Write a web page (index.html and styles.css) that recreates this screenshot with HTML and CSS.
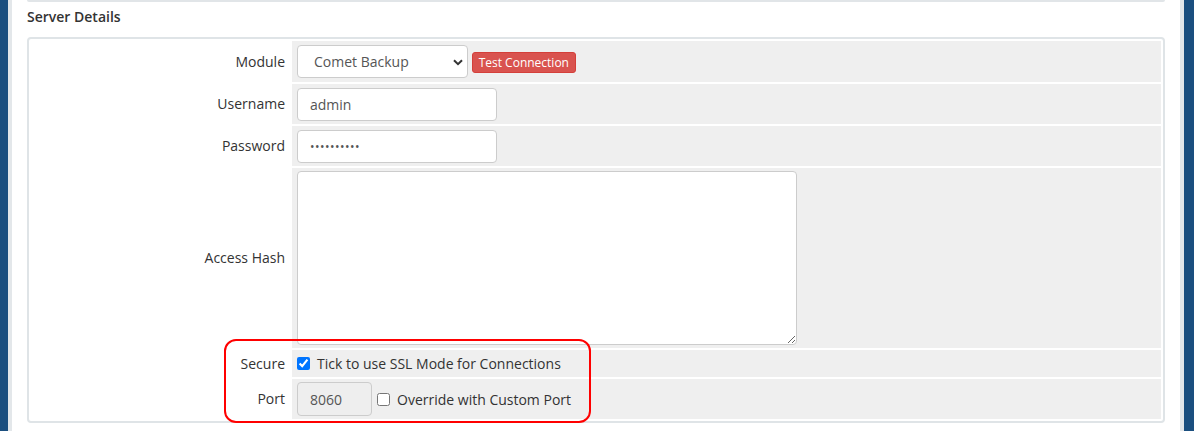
FILE: index.html
```html
<!DOCTYPE html>
<html lang="en">
<head>
<meta charset="utf-8">
<title>Server Details</title>
<link rel="stylesheet" href="styles.css">
</head>
<body>
<div class="frame">
  <div class="edge-blue left"></div>
  <div class="edge-gray"></div>
  <main class="content">
    <div class="prev-panel"></div>
    <h2 class="section-title">Server Details</h2>
    <div class="panel">
      <table class="form">
        <tr class="row-module">
          <td class="fieldlabel">Module</td>
          <td class="fieldarea">
            <span class="select-wrap">
              <select class="form-control select-module">
                <option>Comet Backup</option>
              </select>
              <svg class="chevron" width="10" height="7" viewBox="0 0 10 7"><path d="M1 1.2 L5 5.2 L9 1.2" fill="none" stroke="#333" stroke-width="2"/></svg>
            </span>
            <button class="btn-danger" type="button">Test Connection</button>
          </td>
        </tr>
        <tr class="row-std">
          <td class="fieldlabel">Username</td>
          <td class="fieldarea"><input class="form-control input-std" type="text" value="admin"></td>
        </tr>
        <tr class="row-std">
          <td class="fieldlabel">Password</td>
          <td class="fieldarea"><input class="form-control input-std input-pass" type="password" value="1234567890"></td>
        </tr>
        <tr class="row-hash">
          <td class="fieldlabel">Access Hash</td>
          <td class="fieldarea"><textarea class="form-control hash"></textarea></td>
        </tr>
        <tr class="row-secure">
          <td class="fieldlabel">Secure</td>
          <td class="fieldarea">
            <label class="check"><input type="checkbox" checked> Tick to use SSL Mode for Connections</label>
          </td>
        </tr>
        <tr class="row-std">
          <td class="fieldlabel">Port</td>
          <td class="fieldarea">
            <div class="port-line">
              <input class="form-control input-port" type="text" value="8060" disabled>
              <label class="check"><input type="checkbox"> Override with Custom Port</label>
            </div>
          </td>
        </tr>
      </table>
      <div class="highlight"></div>
    </div>
  </main>
  <div class="edge-gray"></div>
  <div class="edge-blue right"></div>
</div>
</body>
</html>
```
FILE: styles.css
```css
* { box-sizing: border-box; }

html, body {
  margin: 0;
  padding: 0;
  background: #ffffff;
}

body {
  font-family: "Open Sans", "Liberation Sans", sans-serif;
  font-size: 14px;
  color: #333333;
}

.frame {
  display: flex;
  height: 431px;
  overflow: hidden;
}

.edge-blue {
  background: #1b4f7f;
  flex: 0 0 auto;
}
.edge-blue.left { width: 8px; }
.edge-blue.right { width: 10px; }

.edge-gray {
  width: 4px;
  flex: 0 0 auto;
  background: #e3e7ea;
}

.content {
  flex: 1 1 auto;
  padding: 0 15px;
  background: #ffffff;
}

.prev-panel {
  height: 2px;
  background: #e1e5e8;
  border-radius: 0 0 2px 2px;
}

.section-title {
  margin: 5px 0 10px;
  font-size: 14px;
  line-height: 20px;
  font-weight: 600;
  color: #333333;
}

.panel {
  position: relative;
  border: 2px solid #dfe4e7;
  border-radius: 4px;
  background: #ffffff;
}

.form {
  width: 100%;
  border-collapse: separate;
  border-spacing: 2px;
}

.form td {
  padding: 0;
  vertical-align: middle;
}

.fieldlabel {
  width: 259px;
  text-align: right;
  padding: 0 5px 1px 0 !important;
  color: #333333;
  background: #ffffff;
  white-space: nowrap;
}

.fieldarea {
  background: #efefef;
  padding-left: 5px !important;
}

.row-module td { height: 41px; }
.row-std td { height: 40px; }
.row-hash td { height: 180px; }
.row-secure td { height: 27px; }

.form-control {
  font-family: "Open Sans", "Liberation Sans", sans-serif;
  font-size: 14px;
  color: #555555;
  background: #ffffff;
  border: 1px solid #cccccc;
  border-radius: 4px;
  outline: none;
}

.select-wrap {
  position: relative;
  display: inline-block;
  vertical-align: middle;
}

.select-module {
  display: block;
  width: 171px;
  height: 33px;
  padding: 0 20px 0 16px;
  -webkit-appearance: none;
  appearance: none;
}

.chevron {
  position: absolute;
  right: 5px;
  top: 14px;
  pointer-events: none;
}

.btn-danger {
  display: inline-block;
  vertical-align: middle;
  margin-left: 0;
  margin-top: 2px;
  height: 21px;
  padding: 0 6px;
  font-family: "Open Sans", "Liberation Sans", sans-serif;
  font-size: 12px;
  line-height: 19px;
  color: #ffffff;
  background: #d9534f;
  border: 1px solid #d43f3a;
  border-radius: 3px;
}

.input-std {
  display: block;
  width: 200px;
  height: 33px;
  padding: 0 12px;
}

.input-pass {
  letter-spacing: 0.5px;
  font-size: 12px;
}

.hash {
  display: block;
  width: 500px;
  height: 174px;
  resize: both;
}

.check {
  display: inline-flex;
  align-items: center;
  gap: 7px;
  color: #333333;
  white-space: nowrap;
}

.check input {
  margin: 0;
  width: 13px;
  height: 13px;
}

.port-line {
  display: flex;
  align-items: center;
  gap: 5px;
}

.input-port {
  width: 75px;
  height: 34px;
  padding: 0 12px;
  background: #eeeeee;
  color: #555555;
}

.highlight {
  position: absolute;
  left: 195px;
  top: 300px;
  width: 367px;
  height: 84px;
  border: 2px solid #ff0000;
  border-radius: 12px;
  pointer-events: none;
}
```
